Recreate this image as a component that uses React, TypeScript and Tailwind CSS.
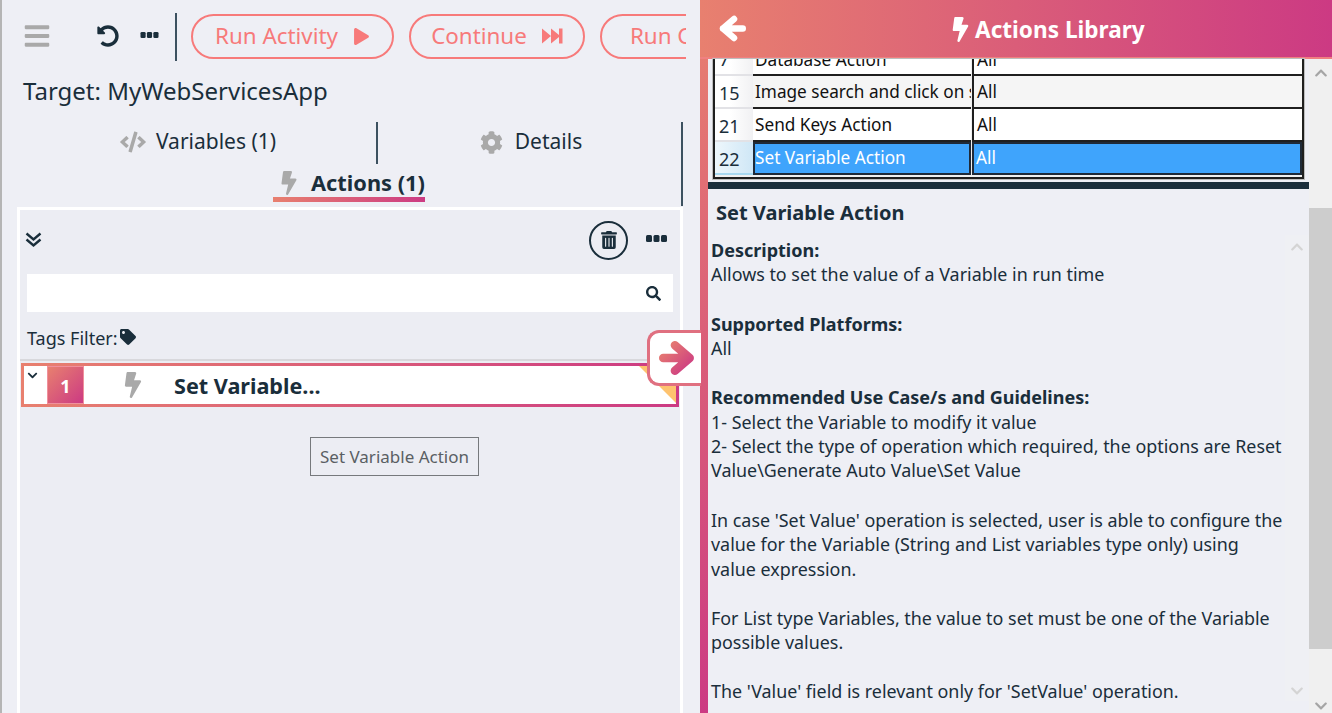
import React from "react";
import { FaBars, FaBolt, FaChevronDown, FaChevronUp, FaCode, FaCog, FaPlay, FaSearch, FaTag, FaTrashAlt, FaUndoAlt } from "react-icons/fa";

function SkipIcon() {
  return (
    <svg width="21" height="16" viewBox="0 0 21 16" fill="currentColor">
      <path d="M0 0.5 L9 8 L0 15.5Z M9 0.5 L17 7V0.5H20.5V15.5H17V9L9 15.5Z" />
    </svg>
  );
}

function Dots({ w, h }: { w: number; h: number }) {
  return (
    <svg width={w} height={h} viewBox="0 0 21 7" fill="currentColor" className="shrink-0">
      <rect x="0" y="0" width="6" height="7" rx="1.5" />
      <rect x="7.5" y="0" width="6" height="7" rx="1.5" />
      <rect x="15" y="0" width="6" height="7" rx="1.5" />
    </svg>
  );
}

function DoubleChevron() {
  return (
    <svg width="17" height="16" viewBox="0 0 17 16" fill="none" stroke="currentColor" strokeWidth="2.4">
      <path d="M1.5 1.5 L8.5 7.5 L15.5 1.5" />
      <path d="M1.5 7.5 L8.5 13.5 L15.5 7.5" />
    </svg>
  );
}

function ThickArrow({ dir, stroke, size, sw }: { dir: "left" | "right"; stroke: string; size: number; sw: number }) {
  return (
    <svg width={size} height={size} viewBox="0 0 34 34" fill="none" stroke={stroke} strokeWidth={sw} strokeLinecap="round" strokeLinejoin="round" className={dir === "left" ? "shrink-0 -scale-x-100" : "shrink-0"}>
      <path d="M4 17 H29 M15 5 L29 17 L15 29" />
    </svg>
  );
}

function PillButton({ label, icon, w }: { label: string; icon?: React.ReactNode; w: string }) {
  return (
    <div className={`flex h-[45px] shrink-0 items-center justify-center gap-[15px] whitespace-nowrap rounded-full border-2 border-[#f77a7a] pb-[1px] text-[22.4px] leading-none text-[#f77a7a] ${w}`}>
      <span>{label}</span>
      {icon}
    </div>
  );
}

const rows = [
  { n: "7", name: "Database Action", h: "h-[17px]", alt: false, sel: false, clip: true },
  { n: "15", name: "Image search and click on screen", h: "h-[33px]", alt: true, sel: false, clip: false },
  { n: "21", name: "Send Keys Action", h: "h-[33px]", alt: false, sel: false, clip: false },
  { n: "22", name: "Set Variable Action", h: "h-[33px]", alt: false, sel: true, clip: false },
];

export default function App() {
  return (
    <div className="flex h-[713px] w-[1332px] overflow-hidden bg-[#eeeff5] text-[#1a2e3b]" style={{ fontFamily: '"Noto Sans", "Open Sans", sans-serif' }}>
      <svg width="0" height="0" className="absolute">
        <defs>
          <linearGradient id="pinkG" x1="0" y1="0" x2="1" y2="1">
            <stop offset="0%" stopColor="#e8806f" />
            <stop offset="100%" stopColor="#cc3a83" />
          </linearGradient>
        </defs>
      </svg>

      {/* Left panel */}
      <div className="relative flex h-full w-[700px] shrink-0 flex-col border-l-2 border-[#b5b5b5] pl-[15px]">
        {/* toolbar */}
        <div className="flex h-[73px] w-[669px] items-start overflow-hidden">
          <FaBars className="ml-[6px] mt-[22px] shrink-0 text-[#a9a9a9]" size={28} />
          <FaUndoAlt className="ml-[46px] mt-[25px] shrink-0 text-[#1a2e3b]" size={22} />
          <div className="ml-[21px] mt-[32px] shrink-0"><Dots w={19} h={6} /></div>
          <div className="ml-[16px] mt-[13px] h-[48px] w-[2px] shrink-0 bg-[#3c5160]" />
          <div className="ml-[14px] mt-[14px] flex gap-[15px]">
            <PillButton label="Run Activity" w="w-[203px]" icon={<FaPlay size={17} />} />
            <PillButton label="Continue" w="w-[176px]" icon={<SkipIcon />} />
            <PillButton label="Run Current Action" w="w-[260px]" />
          </div>
        </div>

        {/* target */}
        <div className="ml-[6px] h-[49px] text-[24px] leading-[36px]">Target: MyWebServicesApp</div>

        {/* tabs */}
        <div className="flex h-[37px] w-[669px] items-start">
          <div className="flex h-[42px] w-[361px] shrink-0 items-center justify-center gap-[10px] border-r-2 border-[#3c5160] pb-[2px] pl-[3px] text-[21px]">
            <FaCode className="text-[#a9a9a9]" size={26} />
            <span>Variables (1)</span>
          </div>
          <div className="flex h-[42px] w-[303px] shrink-0 items-center justify-center gap-[12px] pb-[2px] pl-[3px] text-[21px]">
            <FaCog className="text-[#a9a9a9]" size={23} />
            <span>Details</span>
          </div>
          <div className="h-[84px] w-[2px] shrink-0 bg-[#3c5160]" />
        </div>
        <div className="mt-[2px] h-[46px] w-[665px]">
          <div className="ml-[256px] flex h-[41px] w-[152px] items-center gap-[10px] whitespace-nowrap border-b-[5px] border-transparent pl-[4px] pt-[8px] [border-image:linear-gradient(90deg,#e8806f,#cc3a83)_1] text-[21.8px] font-bold">
            <FaBolt className="shrink-0 text-[#a9a9a9]" size={24} />
            <span>Actions (1)</span>
          </div>
        </div>

        {/* actions box */}
        <div className="flex min-h-0 w-[666px] flex-1 flex-col border-[3px] border-b-0 border-white bg-[#ecedf3]">
          <div className="flex h-[60px] items-center pl-[5px] pr-[13px]">
            <DoubleChevron />
            <div className="ml-auto flex size-[39px] items-center justify-center rounded-full border-2 border-[#1a2e3b]">
              <FaTrashAlt size={18} />
            </div>
            <div className="-mt-[4px] ml-[18px]"><Dots w={21} h={7} /></div>
          </div>
          <div className="mx-[7px] mt-[4px] flex h-[38px] items-center justify-end bg-white pr-[12px]">
            <FaSearch size={15} />
          </div>
          <div className="ml-[7px] mt-[8px] flex h-[39px] items-center gap-[2px] pb-[3px] text-[18px]">
            <span>Tags Filter:</span>
            <FaTag className="-mt-[3px]" size={16} />
          </div>
          <div className="h-[2px] bg-[#d8d8dc]" />
          <div className="relative ml-[1px] mr-[1px] mt-[2px] flex h-[44px] items-stretch p-[3px]" style={{ background: "linear-gradient(90deg,#e8806f,#cc3a83)" }}>
            <div className="flex flex-1 items-stretch bg-white">
              <div className="flex w-[23px] justify-start pl-[3px] pt-[4px]"><FaChevronDown size={11} /></div>
              <div className="flex w-[37px] items-center justify-center border border-[#f0909c] pt-[2px] text-[18px] font-bold text-white" style={{ background: "linear-gradient(135deg,#e8806f,#cc3a83)" }}>1</div>
              <div className="flex w-[62px] shrink-0 items-center justify-end"><FaBolt className="text-[#a9a9a9]" size={26} /></div>
              <div className="ml-[28px] flex items-center pt-[3px] text-[21.6px] font-bold">Set Variable...</div>
            </div>
            <div className="absolute right-[3px] top-[3px] h-[37px] w-[37px] bg-[#fec36f] [clip-path:polygon(0_0,100%_0,100%_100%)]" />
          </div>
          <div className="ml-[290px] mt-[30px] flex h-[39px] w-[169px] items-center justify-center border border-[#76797c] text-[17px] text-[#5a5f63]">Set Variable Action</div>
        </div>

        {/* Collapse tab */}
        <div className="absolute left-[645px] top-[330px] z-10 flex h-[56px] w-[54px] items-center justify-center rounded-l-[12px] border-[3px] border-r-0 border-[#e07080] bg-white pl-[2px]">
          <ThickArrow dir="right" stroke="url(#pinkG)" size={36} sw={8} />
        </div>
      </div>

      {/* Right panel */}
      <div className="flex h-full min-w-0 flex-1 flex-col border-l-[8px] border-transparent [border-image:linear-gradient(180deg,#e8806f,#cc3a83)_1]">
        <div className="-ml-[8px] flex h-[59px] shrink-0 items-center border-b-2 border-[#f08080]" style={{ background: "linear-gradient(90deg,#e8806f,#cc3a83)" }}>
          <div className="ml-[19px] text-white"><ThickArrow dir="left" stroke="white" size={27} sw={8} /></div>
          <div className="ml-[202px] flex items-center gap-[2px] pt-[2px] text-[22.6px] font-bold text-white">
            <FaBolt size={25} />
            <span>Actions Library</span>
          </div>
        </div>

        <div className="flex min-h-0 flex-1">
          <div className="flex min-w-0 flex-1 flex-col">
            {/* grid */}
            <div className="ml-[5px] mr-[5px] h-[120px] shrink-0 overflow-hidden border-2 border-t-0 border-[#1f1f1f] bg-[#f0f0f0] outline outline-1 outline-[#bdbdbd]">
              {rows.map((r) => (
                <div key={r.n} className={`flex ${r.h} overflow-hidden`}>
                  <div className={`w-[38px] shrink-0 border-b-2 pl-[4px] text-[18px] ${r.clip ? "-mt-[16px] leading-[33px]" : "pt-[4px] leading-[27px]"} ${r.sel ? "border-[#a8d8f0] bg-[linear-gradient(90deg,#eef7fc,#cfe7f6)]" : "border-[#e2e2e6] bg-[linear-gradient(90deg,#ffffff_40%,#f1f1f3)]"}`}>{r.n}</div>
                  <div className={`w-[218px] shrink-0 overflow-hidden whitespace-nowrap text-[17.2px] ${r.clip ? "-mt-[14px] h-[31px] leading-[30px]" : ""} ${r.sel ? "border-2 border-[#1f2a38] bg-[#3fa4fc] pl-[0px] pt-[2px] leading-[24px] text-white" : `border-b-2 border-[#1f1f1f] pl-[2px] ${r.clip ? "" : "pt-[2px] leading-[28px]"} text-[#111] ${r.alt ? "bg-[#f5f5f5]" : "bg-white"}`}`}>{r.name}</div>
                  <div className={`ml-[1px] min-w-0 flex-1 overflow-hidden text-[17.2px] ${r.clip ? "-mt-[14px] h-[31px] leading-[30px]" : ""} ${r.sel ? "border-2 border-[#1f2a38] bg-[#3fa4fc] pl-[2px] pt-[2px] leading-[24px] text-white" : `border-b-2 border-l-2 border-[#1f1f1f] pl-[3px] ${r.clip ? "" : "pt-[2px] leading-[28px]"} text-[#111] ${r.alt ? "bg-[#f5f5f5]" : "bg-white"}`}`}>All</div>
                </div>
              ))}
            </div>
            <div className="mt-[3px] h-[7px] shrink-0 bg-[#1a2e3b]" />

            {/* description */}
            <div className="flex min-h-0 flex-1">
              <div className="min-w-0 flex-1 overflow-hidden pl-[3px] text-[17.9px] leading-[24.15px]">
                <div className="ml-[5px] mt-[10px] text-[20px] font-bold leading-[28px]">Set Variable Action</div>
                <div className="mt-[11px] text-[18px] font-bold">Description:</div>
                <div>Allows to set the value of a Variable in run time</div>
                <div className="mt-[26px] text-[18px] font-bold">Supported Platforms:</div>
                <div>All</div>
                <div className="mt-[24px] text-[18px] font-bold">Recommended Use Case/s and Guidelines:</div>
                <div className="mt-[1px]">1- Select the Variable to modify it value</div>
                <div>2- Select the type of operation which required, the options are Reset Value\Generate Auto Value\Set Value</div>
                <div className="mt-[26px]">In case 'Set Value' operation is selected, user is able to configure the value for the Variable (String and List variables type only) using value expression.</div>
                <div className="mt-[25px]">For List type Variables, the value to set must be one of the Variable possible values.</div>
                <div className="mt-[25px]">The 'Value' field is relevant only for 'SetValue' operation.</div>
              </div>
              <div className="mb-[12px] mt-[46px] flex w-[24px] shrink-0 flex-col justify-between bg-[#eff0f4] pb-[3px] pt-[5px] text-[#d4d4d4]">
                <FaChevronUp className="mx-auto" size={14} />
                <FaChevronDown className="mx-auto" size={14} />
              </div>
            </div>
          </div>

          {/* page scrollbar */}
          <div className="flex w-[23px] shrink-0 flex-col items-center bg-[#f0f0f0] text-[#a5a5a5]">
            <FaChevronUp className="mt-[7px]" size={14} />
            <div className="mt-[128px] h-[441px] w-full bg-[#cdcdcd]" />
            <FaChevronDown className="mb-0 mt-auto" size={14} />
          </div>
        </div>
      </div>
    </div>
  );
}
